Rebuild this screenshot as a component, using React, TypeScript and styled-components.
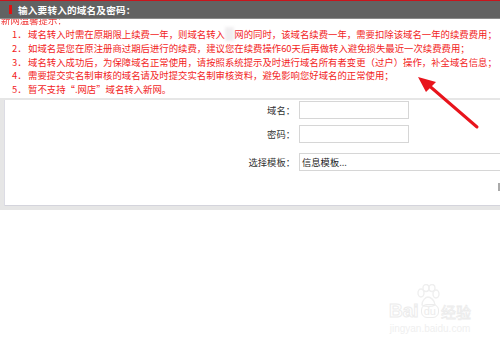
import styled, { createGlobalStyle } from 'styled-components';

const GlobalStyle = createGlobalStyle`
  html, body {
    margin: 0;
    padding: 0;
    background: #fff;
  }
  body {
    font-family: "Noto Sans CJK SC", "Liberation Sans", sans-serif;
  }
`;

const tips = [
  '域名转入时需在原期限上续费一年，则域名转入新网的同时，该域名续费一年，需要扣除该域名一年的续费费用；',
  '如域名是您在原注册商过期后进行的续费，建议您在续费操作60天后再做转入避免损失最近一次续费费用；',
  '域名转入成功后，为保障域名正常使用，请按照系统提示及时进行域名所有者变更（过户）操作，补全域名信息；',
  '需要提交实名制审核的域名请及时提交实名制审核资料，避免影响您好域名的正常使用；',
  '暂不支持“.网店”域名转入新网。',
];

export default function App() {
  return (
    <>
      <GlobalStyle />
      <Page>
        <TopLine />
        <Header>
          <Marker />
          <Title>输入要转入的域名及密码：</Title>
        </Header>

        <TipHeadClip>
          <TipHead>新网温馨提示：</TipHead>
        </TipHeadClip>
        <TipList>
          {tips.map((text, i) => (
            <TipItem key={i}>
              <TipNo>{i + 1}．</TipNo>
              <span>
                {i === 0 ? (
                  <>
                    域名转入时需在原期限上续费一年，则域名转入<Blur>新</Blur>网的同时，该域名续费一年，需要扣除该域名一年的续费费用；
                  </>
                ) : (
                  text
                )}
              </span>
            </TipItem>
          ))}
        </TipList>

        <Panel>
          <FormGrid>
            <Label>域名：</Label>
            <Field>
              <TextInput />
            </Field>
            <Label>密码：</Label>
            <Field>
              <TextInput />
            </Field>
            <Label $gap>选择模板：</Label>
            <Field $gap>
              <Select>信息模板...</Select>
            </Field>
          </FormGrid>
          <Caret />
        </Panel>

        <Arrow width="500" height="343" viewBox="0 0 500 343">
          <line x1="477" y1="127" x2="426" y2="83" stroke="#e8141c" strokeWidth="3" strokeLinecap="round" />
          <polygon points="418,77 436,82 426,92" fill="#e8141c" />
        </Arrow>

        <Watermark>
          <Paw>
            <svg width="26" height="24" viewBox="0 0 26 24">
              <g fill="none" stroke="#efefef" strokeWidth="1.4">
                <ellipse cx="6" cy="9" rx="3" ry="4" />
                <ellipse cx="11" cy="4" rx="3" ry="3.5" />
                <ellipse cx="17" cy="4" rx="3" ry="3.5" />
                <ellipse cx="21" cy="10" rx="3" ry="4" />
                <path d="M7 21c0-5 4-8 6-8s7 3 7 8c-3 2-10 2-13 0z" />
              </g>
            </svg>
          </Paw>
          <MarkRow>
            <MarkBig>Bai</MarkBig>
            <MarkDu>du</MarkDu>
            <MarkCn>经验</MarkCn>
          </MarkRow>
          <MarkUrl>jingyan.baidu.com</MarkUrl>
        </Watermark>
      </Page>
    </>
  );
}

const Page = styled.div`
  position: relative;
  width: 500px;
  height: 343px;
  overflow: hidden;
  background: #fff;
`;

const TopLine = styled.div`
  height: 1px;
  background: #c8141c;
`;

const Header = styled.div`
  display: flex;
  align-items: center;
  gap: 6px;
  height: 17px;
  padding-left: 9px;
  background: #626262;
  border-bottom: 1px solid #8a8a8a;
`;

const Marker = styled.div`
  width: 3px;
  height: 9px;
  background: #e01010;
`;

const Title = styled.span`
  color: #fff;
  font-size: 9.6px;
  font-weight: bold;
  letter-spacing: 0.2px;
`;

const TipHeadClip = styled.div`
  height: 8px;
  overflow: hidden;
  display: flex;
  align-items: flex-end;
  padding-left: 1px;
`;

const TipHead = styled.div`
  color: #f03a3a;
  font-size: 9.4px;
  line-height: 13px;
  filter: blur(0.6px);
`;

const TipList = styled.ol`
  list-style: none;
  margin: 0;
  padding: 1px 0 0 12px;
`;

const TipItem = styled.li`
  display: flex;
  color: #f21d1d;
  font-size: 9.4px;
  line-height: 13.8px;
  white-space: nowrap;
`;

const TipNo = styled.span`
  width: 16px;
  flex-shrink: 0;
`;

const Blur = styled.span`
  color: transparent;
  background: #f0eef0;
  filter: blur(1.5px);
`;

const Panel = styled.div`
  position: relative;
  margin-top: 1px;
  height: 106px;
  background: #fff;
  border-top: 2px solid #e6e6e6;
  border-left: 4px solid #e6e6e6;
  border-bottom: 4px solid #e6e6e6;
  box-shadow: inset 1px 0 0 #dcdce4, inset 0 -1px 0 #d4d4dc;
`;

const FormGrid = styled.div`
  display: grid;
  grid-template-columns: 291px 1fr;
  column-gap: 4px;
  row-gap: 6px;
  align-items: center;
  padding-top: 1px;
`;

const Label = styled.div<{ $gap?: boolean }>`
  text-align: right;
  color: #333;
  font-size: 9.3px;
  margin-top: ${({ $gap }) => ($gap ? '4px' : '0')};
`;

const Field = styled.div<{ $gap?: boolean }>`
  display: flex;
  margin-top: ${({ $gap }) => ($gap ? '4px' : '0')};
`;

const TextInput = styled.div`
  width: 108px;
  height: 16px;
  border: 1px solid #d6d6d6;
  background: #fff;
`;

const Select = styled.div`
  width: 220px;
  height: 16px;
  display: flex;
  align-items: center;
  padding-left: 2px;
  border: 1px solid #d6d6d6;
  font-size: 9.3px;
  color: #222;
`;

const Caret = styled.div`
  position: absolute;
  right: 0;
  top: 83px;
  width: 2px;
  height: 8px;
  background: #aaa;
`;

const Arrow = styled.svg`
  position: absolute;
  left: 0;
  top: 0;
  pointer-events: none;
`;

const Watermark = styled.div`
  position: absolute;
  left: 385px;
  top: 284px;
  width: 90px;
  display: flex;
  flex-direction: column;
  align-items: center;
  color: #f0f0f0;
  font-family: "Liberation Sans", sans-serif;
`;

const Paw = styled.div`
  margin-left: -4px;
  height: 22px;
`;

const MarkRow = styled.div`
  display: flex;
  align-items: center;
  gap: 2px;
  margin-top: -6px;
`;

const MarkBig = styled.span`
  font-size: 19px;
  font-weight: bold;
  color: transparent;
  -webkit-text-stroke: 1px #ececec;
`;

const MarkDu = styled.span`
  font-size: 11px;
  color: #ececec;
  border: 1px solid #ececec;
  border-radius: 6px;
  padding: 0 2px;
`;

const MarkCn = styled.span`
  font-family: "Noto Sans CJK SC", sans-serif;
  font-size: 15px;
  color: transparent;
  -webkit-text-stroke: 0.8px #ececec;
`;

const MarkUrl = styled.span`
  font-size: 10px;
  color: #efefef;
  margin-top: 1px;
`;
